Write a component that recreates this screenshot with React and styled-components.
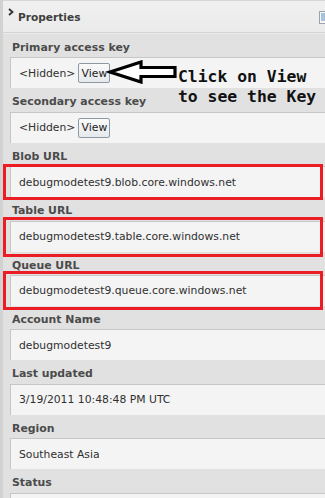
import React from "react";
import styled, { createGlobalStyle } from "styled-components";

const Global = createGlobalStyle`
  html, body { margin: 0; padding: 0; }
  body {
    width: 325px;
    height: 498px;
    overflow: hidden;
    background: #e1e1e1;
    font-family: "DejaVu Sans", Verdana, sans-serif;
  }
`;

const Page = styled.div`
  position: relative;
  width: 325px;
  height: 498px;
  overflow: hidden;
  background: #e1e1e1;
  border-left: 3px solid #d2d2d2;
  box-sizing: border-box;
`;

const Header = styled.div`
  height: 33px;
  display: flex;
  align-items: center;
  background: linear-gradient(#f0f0f0, #ebebeb);
  border-top: 1px solid #d6d6d6;
  border-bottom: 1px solid #d3d3d3;
  box-sizing: border-box;
  position: relative;
`;

const Chevron = styled.svg`
  position: absolute;
  left: 5px;
  top: 7px;
`;

const Title = styled.span`
  margin-left: 15px;
  font-weight: bold;
  font-size: 10.6px;
  color: #3e3e3e;
`;

const DocIcon = styled.svg`
  margin-left: auto;
  margin-right: -6px;
  margin-top: 2px;
`;

const Body = styled.div`
  padding-left: 7px;
  border-top: 1px solid #ececec;
`;

const Section = styled.div`
  display: flex;
  flex-direction: column;
`;

const Label = styled.div`
  height: 23.4px;
  box-sizing: border-box;
  padding: 5px 0 0 2px;
  line-height: 18px;
  font-size: 10.9px;
  font-weight: bold;
  color: #4b4b4b;
  white-space: nowrap;
`;

const Field = styled.div`
  position: relative;
  height: 31px;
  box-sizing: border-box;
  margin-right: -20px;
  display: flex;
  align-items: center;
  gap: 3px;
  padding-left: 8px;
  background: #f4f4f4;
  border-top: 1px solid #c6c6c6;
  border-left: 1px solid #c6c6c6;
  font-size: 10.8px;
  color: #303030;
  white-space: nowrap;
`;

const Highlight = styled.div`
  position: absolute;
  left: -8px;
  width: 320px;
  top: ${(p) => p.$top}px;
  bottom: ${(p) => p.$bottom}px;
  border: 3px solid #ec1c24;
  box-sizing: border-box;
  pointer-events: none;
`;

const ViewButton = styled.button`
  height: 20px;
  width: 32px;
  padding: 0;
  font-family: inherit;
  font-size: 10.8px;
  color: #222;
  background: linear-gradient(#fafafa, #e6e9ec);
  border: 1px solid #8d9aa6;
  border-radius: 2px;
`;

const Callout = styled.div`
  position: absolute;
  left: 104px;
  top: 60px;
  display: flex;
  align-items: flex-start;
  gap: 1px;
`;

const CalloutText = styled.div`
  font-family: "DejaVu Sans Mono", "Liberation Mono", monospace;
  font-weight: bold;
  font-size: 16.4px;
  line-height: 20px;
  color: #111;
  margin-top: 7px;
  white-space: pre;
`;

const sections = [
  { label: "Primary access key", hidden: true },
  { label: "Secondary access key", hidden: true },
  { label: "Blob URL", value: "debugmodetest9.blob.core.windows.net", hl: [-3, -3] },
  { label: "Table URL", value: "debugmodetest9.table.core.windows.net", hl: [-5, -5] },
  { label: "Queue URL", value: "debugmodetest9.queue.core.windows.net", hl: [-5, -4] },
  { label: "Account Name", value: "debugmodetest9" },
  { label: "Last updated", value: "3/19/2011 10:48:48 PM UTC" },
  { label: "Region", value: "Southeast Asia" },
  { label: "Status", value: "" },
];

export default function App() {
  return (
    <>
      <Global />
      <Page>
        <Header>
          <Chevron width="6" height="8" viewBox="0 0 6 8">
            <path d="M1 1 L4.5 4 L1 7" fill="none" stroke="#333" strokeWidth="1.8" />
          </Chevron>
          <Title>Properties</Title>
          <DocIcon width="12" height="14" viewBox="0 0 12 14">
            <rect x="0.5" y="0.5" width="9" height="12" fill="#f6f6f6" stroke="#9aa4ad" />
            <path d="M2 3h6M2 5h6M2 7h6M2 9h5" stroke="#5b8fc7" strokeWidth="1" />
          </DocIcon>
        </Header>
        <Body>
          {sections.map((s) => (
            <Section key={s.label}>
              <Label>{s.label}</Label>
              <Field>
                {s.hidden ? (
                  <>
                    <span>&lt;Hidden&gt;</span>
                    <ViewButton>View</ViewButton>
                  </>
                ) : (
                  <span>{s.value}</span>
                )}
                {s.hl && <Highlight $top={s.hl[0]} $bottom={s.hl[1]} />}
              </Field>
            </Section>
          ))}
        </Body>
        <Callout>
          <svg width="70" height="24" viewBox="0 0 70 24">
            <polygon
              points="3,12 34,2 34,7.5 68,7.5 68,16.5 34,16.5 34,22"
              fill="#fff"
              stroke="#000"
              strokeWidth="3.2"
              strokeLinejoin="miter"
            />
          </svg>
          <CalloutText>{"Click on View\nto see the Key"}</CalloutText>
        </Callout>
      </Page>
    </>
  );
}
